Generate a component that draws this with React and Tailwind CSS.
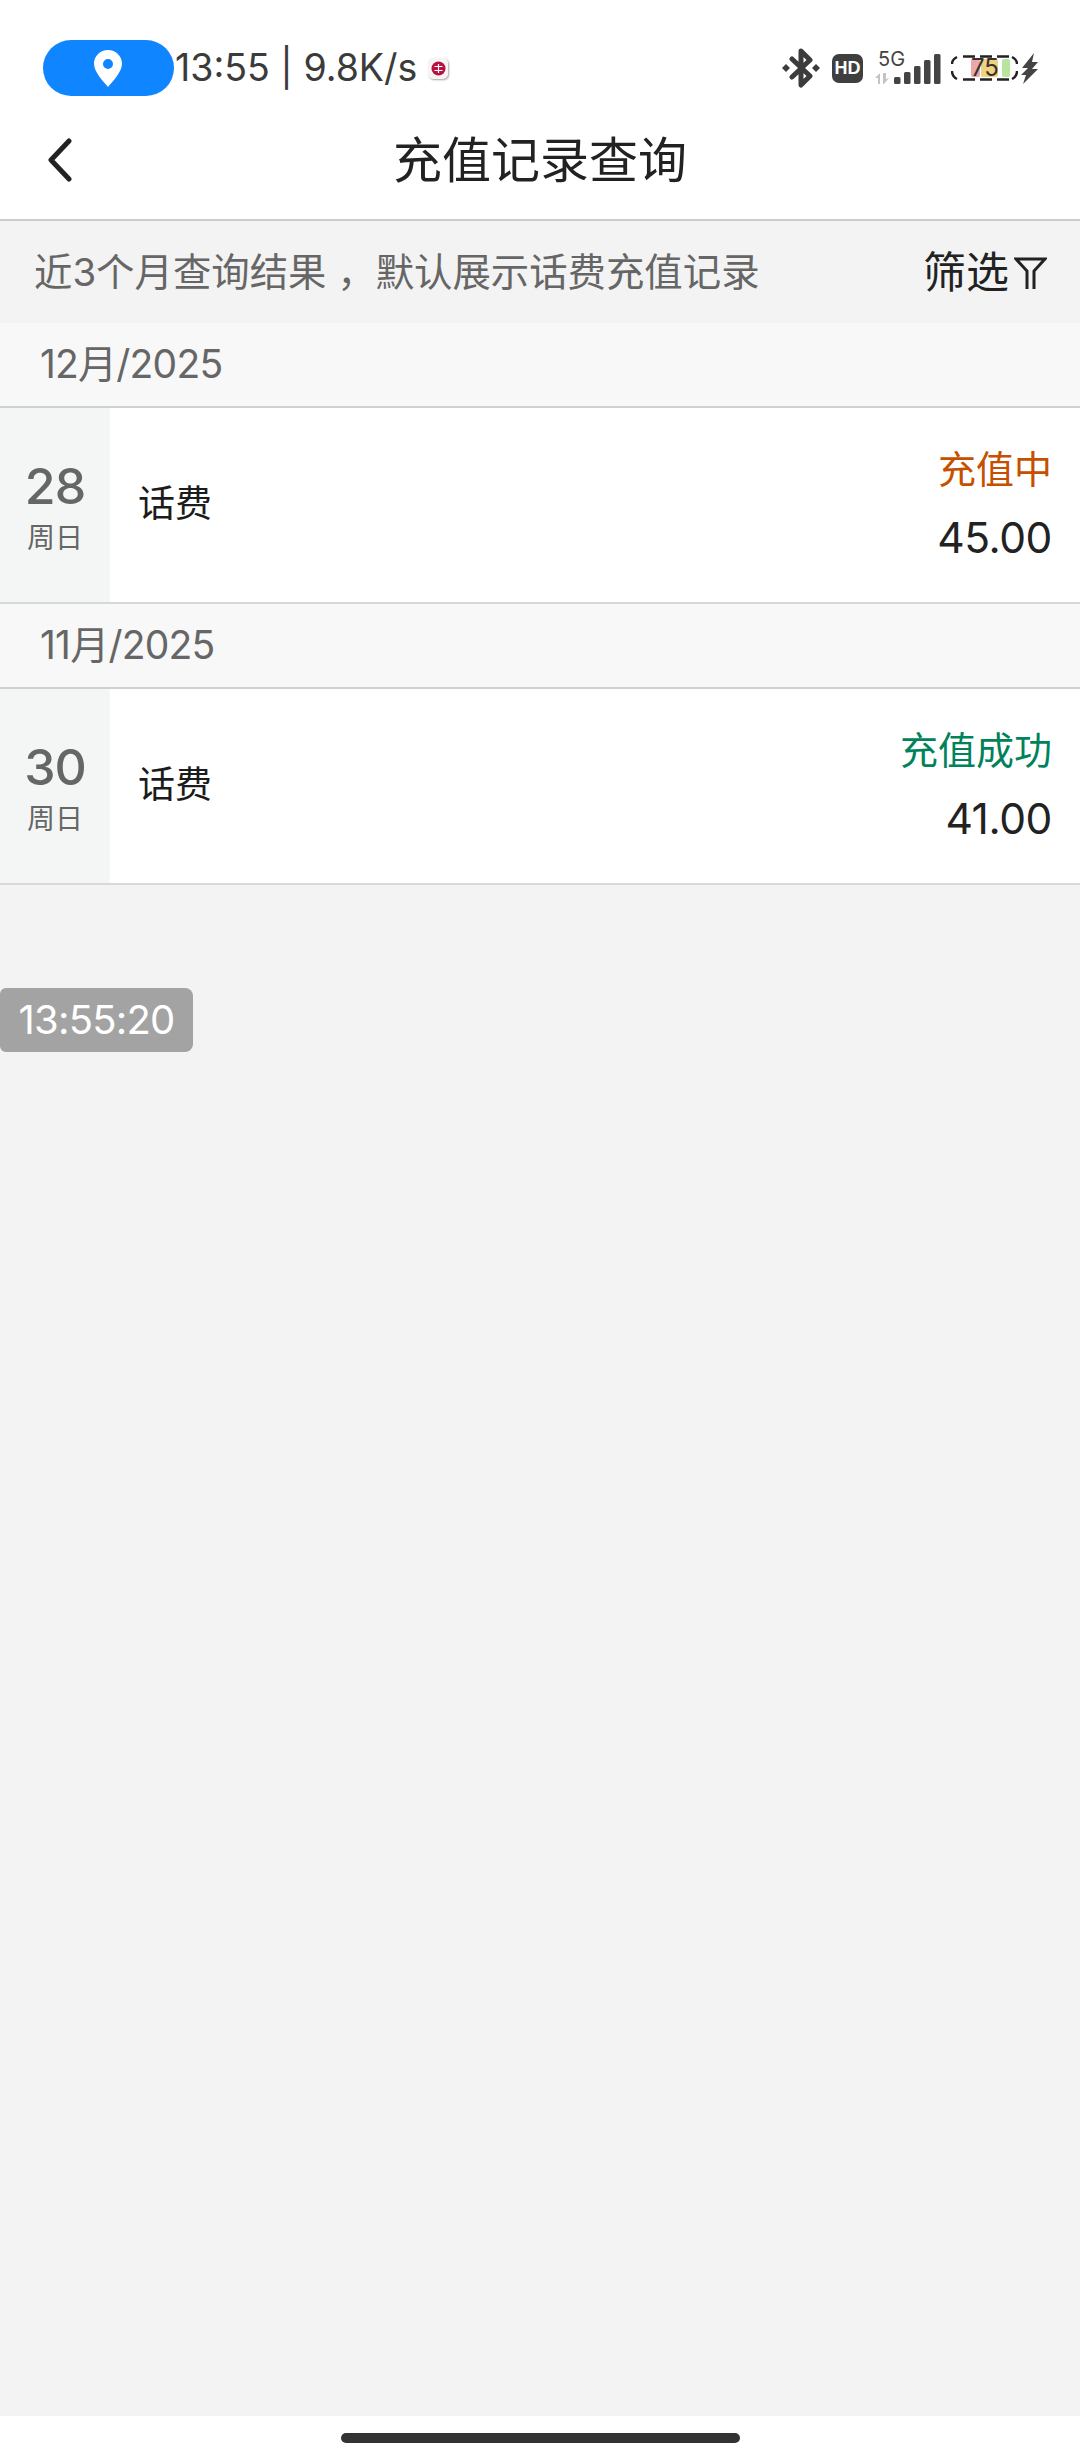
import React from 'react';

const records = [
  { month: '12月/2025', day: '28', week: '周日', name: '话费', status: '充值中', statusClass: 'text-[#c64f00]', amount: '45.00' },
  { month: '11月/2025', day: '30', week: '周日', name: '话费', status: '充值成功', statusClass: 'text-[#00835a]', amount: '41.00' },
];

const StatusIcons = () => (
  <div className="flex items-center">
    {/* bluetooth */}
    <svg width="38" height="40" viewBox="0 0 38 40" fill="none" stroke="#3c3c3c" strokeWidth="5" strokeLinejoin="round" strokeLinecap="round">
      <path d="M10 11l18 17-9 9V3l9 9-18 17" />
      <path d="M4 16l4 4-4 4-4-4zM34 16l4 4-4 4-4-4z" fill="#3c3c3c" stroke="none" />
    </svg>
    {/* HD badge */}
    <div className="ml-[12px] w-[31px] h-[29px] rounded-[7px] bg-[#3f3f3f] flex items-center justify-center text-white text-[18px] leading-none font-bold font-['Liberation_Sans',sans-serif]">
      HD
    </div>
    {/* 5G and signal */}
    <div className="ml-[11px] relative w-[69px] h-[34px]">
      <span className="absolute left-[4px] top-[-2px] text-[#444444] text-[20px] leading-[20px]">5G</span>
      <svg className="absolute inset-0" width="69" height="34" viewBox="0 0 69 34">
        <path d="M1 27l5-5v11H4v-6zM9 22h3v6l3-1-5 6H9z" fill="#c4c4c4" />
        <rect x="20" y="26" width="6.500" height="7" rx="1.500" fill="#444444" />
        <rect x="30" y="21" width="6.500" height="12" rx="1.500" fill="#444444" />
        <rect x="40" y="15" width="6.500" height="18" rx="1.500" fill="#444444" />
        <rect x="50" y="9" width="6.500" height="24" rx="1.500" fill="#444444" />
        <rect x="60" y="3" width="6.500" height="30" rx="1.500" fill="#444444" />
      </svg>
    </div>
    {/* battery */}
    <div className="ml-[8px] relative w-[67px] h-[26px]">
      <svg className="absolute inset-0" width="67" height="26" viewBox="0 0 67 26" fill="none">
        <rect x="20" y="4" width="9" height="18" rx="2" fill="#e9a9a9" />
        <rect x="30" y="4" width="17" height="18" rx="2" fill="#eed27f" />
        <rect x="51" y="4" width="8" height="18" rx="2" fill="#b8e4a0" />
        <path d="M6 2C2 4 1 7 1 9M1 16c0 3 1 6 5 8M61 2c4 2 5 5 5 7M66 16c0 3-1 6-5 8" stroke="#222222" strokeWidth="2.400" />
        <path d="M12 1.500h12M29 1.500h12M46 1.500h12M12 24.500h12M29 24.500h12M46 24.500h12" stroke="#222222" strokeWidth="2.400" />
      </svg>
      <span className="absolute left-[20px] top-0 text-[24px] leading-[26px] text-[#3a3030]">75</span>
    </div>
    {/* charging bolt */}
    <svg className="ml-[3px]" width="18" height="31" viewBox="0 0 18 31" fill="#444444">
      <path d="M13 0L1 15h6L0 22h5l-3 9 15-15h-6l6-7h-6z" />
    </svg>
  </div>
);

const RecordGroup = ({ record }) => (
  <section>
    <div className="h-[85px] bg-[#f8f8f8] border-b-2 border-[#cfcfd6] pl-[40px] pb-[2px] flex items-center text-[#666666] text-[39px] tracking-[-0.02em] leading-none">
      {record.month}
    </div>
    <div className="h-[196px] bg-white border-b-2 border-[#d8d8d8] flex">
      <div className="w-[110px] bg-[#f4f6f6] flex flex-col items-center justify-center text-[#666666]">
        <div className="text-[50px] leading-[62px] tracking-[-0.02em] font-medium">{record.day}</div>
        <div className="mt-[3px] text-[28px] leading-[36px]">{record.week}</div>
      </div>
      <div className="flex-1 flex items-center justify-between pl-[28px] pr-[28px]">
        <div className="pb-[3px] text-[37px] leading-none text-[#1c1c1c]">{record.name}</div>
        <div className="flex flex-col items-end">
          <div className="text-[38px] leading-[46px]">
            <span className={record.statusClass}>{record.status}</span>
          </div>
          <div className="mt-[20px] text-[42.5px] leading-[52px] tracking-[-0.01em] text-[#222222]">{record.amount}</div>
        </div>
      </div>
    </div>
  </section>
);

export default function App() {
  return (
    <div className="w-[1080px] h-[2460px] flex flex-col bg-white font-['Inter','Noto_Sans_CJK_SC',sans-serif]">
      {/* status bar */}
      <div className="h-[96px] shrink-0 pt-[40px] pl-[43px] pr-[41px] flex items-start justify-between">
        <div className="flex items-center h-[56px]">
          <div className="w-[131px] h-[56px] rounded-full bg-[#0f85ff] flex items-center justify-center">
            <svg className="ml-[-2px]" width="28" height="37" viewBox="0 0 28 37">
              <path fillRule="evenodd" fill="#ffffff" d="M14 0c7.700 0 14 6 14 13.500C28 22 19 31 14 37 9 31 0 22 0 13.500 0 6 6.300 0 14 0zm0 9a5 5 0 1 0 0 10 5 5 0 0 0 0-10z" />
            </svg>
          </div>
          <span className="ml-[1px] text-[37.5px] leading-none text-[#3b3b3b] whitespace-nowrap">13:55 | 9.8K/s</span>
          <div className="ml-[11px] w-[20px] h-[21px] rounded-[5px] bg-[#f8f4f5] shadow-[1px_1px_2px_rgba(0,0,0,0.35)] flex items-center justify-center">
            <svg width="15" height="15" viewBox="0 0 15 15" fill="none">
              <circle cx="7.500" cy="7.500" r="7" fill="#b5123f" />
              <path d="M3.500 5.500h8M3.500 9.500h8M7.500 3v9" stroke="#ffffff" strokeWidth="1.200" />
            </svg>
          </div>
        </div>
        <div className="mt-[8px]">
          <StatusIcons />
        </div>
      </div>

      {/* title bar */}
      <header className="h-[125px] shrink-0 relative border-b-2 border-[#cccccc] flex items-center justify-center">
        <svg className="absolute left-[46px] top-[42px]" width="28" height="44" viewBox="0 0 28 44" fill="none" stroke="#222222" strokeWidth="5" strokeLinecap="round" strokeLinejoin="round">
          <path d="M23 3L5 22l18 19" />
        </svg>
        <h1 className="mt-[6px] text-[49px] leading-none text-[#222222] font-normal">充值记录查询</h1>
      </header>

      {/* list */}
      <main className="flex-1 bg-[#f3f3f3]">
        <div className="h-[102px] pl-[34px] pr-[33px] flex items-center justify-between">
          <div className="text-[38.4px] leading-none text-[#666666] whitespace-nowrap">近3个月查询结果 ，默认展示话费充值记录</div>
          <div className="flex items-center text-[#222222]">
            <span className="text-[43px] leading-none">筛选</span>
            <svg className="ml-[5px] mt-[2px]" width="33" height="33" viewBox="0 0 33 33" fill="none" stroke="#222222" strokeWidth="3" strokeLinejoin="miter">
              <path d="M13 32V14L2 2h29L20 14v18" />
            </svg>
          </div>
        </div>

        {records.map((record) => (
          <RecordGroup key={record.month} record={record} />
        ))}

        <div className="mt-[103px] w-[193px] h-[64px] rounded-r-[8px] rounded-l-[6px] bg-[#a3a3a3] flex items-center justify-center text-white text-[40px] tracking-[-0.02em] leading-none">
          13:55:20
        </div>
      </main>

      {/* gesture bar */}
      <div className="h-[44px] shrink-0 bg-white flex items-start justify-center pt-[17px]">
        <div className="w-[399px] h-[10px] rounded-full bg-[#333333]" />
      </div>
    </div>
  );
}
